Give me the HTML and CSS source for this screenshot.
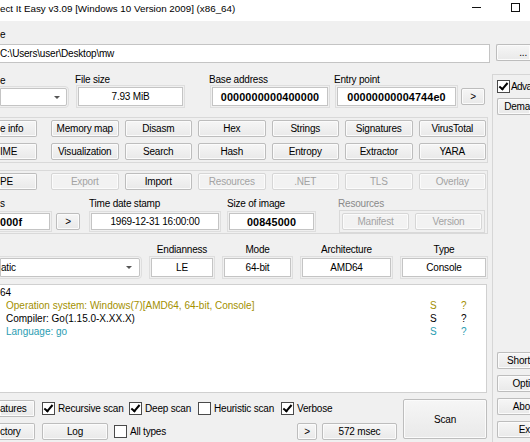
FILE: index.html
```html
<!DOCTYPE html>
<html lang="en">
<head>
    <meta charset="UTF-8">
    <title>Detect It Easy v3.09</title>
    <link rel="stylesheet" href="styles.css">
</head>
<body>
    <div class="titlebar">
        <span class="title">ect It Easy v3.09 [Windows 10 Version 2009] (x86_64)</span>
        <span class="ctl ctl-min"><i></i></span>
        <span class="ctl ctl-max"><i></i></span>
    </div>

    <div class="file-label">e</div>
    <div class="file-row">
        <div class="edit path">C:\Users\user\Desktop\mw</div>
        <div class="btn rcut dots">...</div>
    </div>

    <div class="panes">
        <div class="main">
            <div class="info-row">
                <div class="grp g-type">
                    <div class="lbl">e</div>
                    <div class="combo cut framed"><span></span><i class="arrow"></i></div>
                </div>
                <div class="grp g-size">
                    <div class="lbl">File size</div>
                    <div class="edit val framed">7.93 MiB</div>
                </div>
                <div class="grp g-base">
                    <div class="lbl">Base address</div>
                    <div class="edit val framed hex">0000000000400000</div>
                </div>
                <div class="grp g-entry">
                    <div class="lbl">Entry point</div>
                    <div class="edit val framed hex">00000000004744e0</div>
                </div>
                <div class="btn go">&gt;</div>
            </div>

            <div class="box tools">
                <div class="btn cut">e info</div>
                <div class="btn">Memory map</div>
                <div class="btn">Disasm</div>
                <div class="btn">Hex</div>
                <div class="btn">Strings</div>
                <div class="btn">Signatures</div>
                <div class="btn">VirusTotal</div>
                <div class="btn cut">IME</div>
                <div class="btn">Visualization</div>
                <div class="btn">Search</div>
                <div class="btn">Hash</div>
                <div class="btn">Entropy</div>
                <div class="btn">Extractor</div>
                <div class="btn">YARA</div>
            </div>

            <div class="box pe">
                <div class="tools-row">
                    <div class="btn cut">PE</div>
                    <div class="btn off">Export</div>
                    <div class="btn">Import</div>
                    <div class="btn off">Resources</div>
                    <div class="btn off">.NET</div>
                    <div class="btn off">TLS</div>
                    <div class="btn off">Overlay</div>
                </div>
                <div class="pe-row">
                    <div class="grp g-sec">
                        <div class="lbl">s</div>
                        <div class="edit val framed hex left-cut">000f</div>
                    </div>
                    <div class="btn go2">&gt;</div>
                    <div class="grp g-time">
                        <div class="lbl">Time date stamp</div>
                        <div class="edit val framed">1969-12-31 16:00:00</div>
                    </div>
                    <div class="grp g-img">
                        <div class="lbl">Size of image</div>
                        <div class="edit val framed hex">00845000</div>
                    </div>
                    <div class="grp g-res">
                        <div class="lbl dim">Resources</div>
                        <div class="res-frame">
                            <div class="btn off">Manifest</div>
                            <div class="btn off">Version</div>
                        </div>
                    </div>
                </div>
            </div>

            <div class="arch-row">
                <div class="lbl"></div>
                <div class="lbl">Endianness</div>
                <div class="lbl">Mode</div>
                <div class="lbl">Architecture</div>
                <div class="lbl">Type</div>
                <div class="combo cut framed wide"><span>atic</span><i class="arrow"></i></div>
                <div class="edit val framed">LE</div>
                <div class="edit val framed">64-bit</div>
                <div class="edit val framed">AMD64</div>
                <div class="edit val framed">Console</div>
            </div>

            <div class="result">
                <div class="node">64</div>
                <div class="leaf os"><span>Operation system: Windows(7)[AMD64, 64-bit, Console]</span><span>S</span><span>?</span></div>
                <div class="leaf"><span>Compiler: Go(1.15.0-X.XX.X)</span><span>S</span><span>?</span></div>
                <div class="leaf lang"><span>Language: go</span><span>S</span><span>?</span></div>
            </div>

            <div class="bottom">
                <div class="bottom-left">
                    <div class="brow brow1">
                        <div class="btn cut">atures</div>
                        <label class="check"><i class="box-c on"></i>Recursive scan</label>
                        <label class="check"><i class="box-c on"></i>Deep scan</label>
                        <label class="check"><i class="box-c"></i>Heuristic scan</label>
                        <label class="check"><i class="box-c on"></i>Verbose</label>
                    </div>
                    <div class="brow brow2">
                        <div class="btn cut">ctory</div>
                        <div class="btn log">Log</div>
                        <label class="check"><i class="box-c"></i>All types</label>
                        <div class="btn">&gt;</div>
                        <div class="btn">572 msec</div>
                    </div>
                </div>
                <div class="btn scan">Scan</div>
            </div>
        </div>

        <div class="side">
            <label class="check adv"><i class="box-c on"></i>Adva</label>
            <div class="btn rcut side-btn dema">Dema</div>
            <div class="side-fill"></div>
            <div class="btn rcut side-btn">Short</div>
            <div class="btn rcut side-btn">Opti</div>
            <div class="btn rcut side-btn">Abo</div>
            <div class="btn rcut side-btn">Ex</div>
        </div>
    </div>
</body>
</html>
```

FILE: styles.css
```css
body {
    margin: 0;
    width: 530px;
    height: 442px;
    overflow: hidden;
    background: #f0f0f0;
    color: #000;
    font-family: "Liberation Sans", Arial, sans-serif;
    font-size: 10px;
    letter-spacing: -0.2px;
}
.titlebar {
    height: 21px;
    background: #fff;
    display: flex;
    align-items: flex-start;
}
.title {
    flex: 1;
    min-width: 0;
    font-size: 9.8px;
    letter-spacing: 0;
    line-height: 17px;
    white-space: nowrap;
    overflow: hidden;
}
.ctl {
    flex: none;
    width: 39px;
    height: 16px;
    display: flex;
    justify-content: center;
}
.ctl-min i {
    width: 9px;
    height: 1px;
    margin-top: 7px;
    background: #111;
}
.ctl-max {
    width: 34px;
    justify-content: flex-start;
    padding-left: 15px;
    box-sizing: border-box;
}
.ctl-max i {
    width: 7px;
    height: 7px;
    margin-top: 3px;
    border: 1px solid #111;
}
.file-label {
    padding-top: 7px;
    line-height: 13px;
    margin-bottom: 3px;
}
.file-row {
    display: flex;
    height: 19px;
}
.edit {
    box-sizing: border-box;
    height: 19px;
    background: #fff;
    border: 1px solid #c4c4c4;
    display: flex;
    align-items: center;
    white-space: nowrap;
    overflow: hidden;
}
.path {
    flex: none;
    width: 490px;
    border-left: none;
}
.dots {
    margin-left: 6px;
    flex: 1;
    min-width: 0;
    height: 19px;
    padding-right: 3px;
}
.btn {
    box-sizing: border-box;
    height: 17px;
    border: 1px solid #bdbdbd;
    border-radius: 2px;
    background: linear-gradient(#f6f6f6, #e9e9e9);
    box-shadow: inset 0 0 0 1px #fbfbfb;
    display: flex;
    align-items: center;
    justify-content: center;
    white-space: nowrap;
    overflow: hidden;
}
.btn.off {
    color: #a3a3a3;
    border-color: #d6d6d6;
    background: #f2f2f2;
}
.cut {
    border-left: none;
    border-radius: 0 2px 2px 0;
    justify-content: flex-start;
}
.rcut {
    border-right: none;
    border-radius: 2px 0 0 2px;
    justify-content: flex-end;
}
.panes {
    display: flex;
    height: 379px;
}
.main {
    flex: none;
    width: 488px;
    padding-top: 10px;
}
.lbl {
    line-height: 13px;
    height: 13px;
    white-space: nowrap;
}
.lbl.dim {
    color: #8a8a8a;
}
.info-row {
    display: flex;
    align-items: flex-end;
}
.grp .edit {
    margin-top: 1px;
}
.val {
    justify-content: center;
}
.edit.left-cut {
    border-left: none;
    justify-content: flex-start;
}
.hex {
    font-weight: bold;
    font-size: 10.8px;
    letter-spacing: 0.15px;
}
.framed {
    outline: 1px solid #dedede;
    outline-offset: 1px;
}
.combo {
    box-sizing: border-box;
    height: 18px;
    margin-top: 1px;
    background: #fff;
    border: 1px solid #c4c4c4;
    display: flex;
    align-items: center;
    padding-right: 6px;
}
.combo span {
    flex: 1;
}
.arrow {
    width: 0;
    height: 0;
    border-left: 3px solid transparent;
    border-right: 3px solid transparent;
    border-top: 3px solid #555;
}
.g-type {
    width: 67px;
}
.g-size {
    width: 108px;
    margin-left: 8px;
}
.g-base {
    width: 119px;
    margin-left: 26px;
}
.g-entry {
    width: 122px;
    margin-left: 6px;
}
.g-size .edit,
.g-base .edit,
.g-entry .edit {
    margin-left: 3px;
}
.go {
    width: 24px;
    margin-left: 5px;
    margin-bottom: 1px;
}
.box {
    box-sizing: border-box;
    width: 488px;
    border: 1px solid #d9d9d9;
    border-left: none;
    padding: 2px 1px 2px 0;
}
.tools,
.tools-row {
    display: grid;
    grid-template-columns: 45px repeat(6, 1fr);
    column-gap: 6px;
    row-gap: 6px;
}
.tools {
    margin-top: 11px;
}
.tools .cut,
.tools-row .cut {
    width: 37px;
}
.pe {
    margin-top: 7px;
    padding-bottom: 0;
}
.pe-row {
    display: flex;
    align-items: flex-start;
    margin-top: 7px;
}
.pe-row .edit {
    height: 17px;
    margin-top: 3px;
}
.g-sec {
    width: 50px;
}
.go2 {
    width: 24px;
    margin-left: 6px;
    margin-top: 16px;
}
.g-time {
    width: 130px;
    margin-left: 9px;
}
.g-time .edit,
.g-img .edit {
    margin-left: 2px;
}
.g-img {
    width: 87px;
    margin-left: 8px;
}
.g-res {
    width: 147px;
    margin-left: 24px;
}
.res-frame {
    margin-left: 1px;
    border: 1px solid #d9d9d9;
    padding: 2px;
    display: flex;
    gap: 6px;
}
.res-frame .btn {
    width: 67px;
}
.arch-row {
    display: grid;
    grid-template-columns: 140px 62px 67px 89px 1fr;
    column-gap: 11px;
    margin-top: 9px;
    width: 486px;
}
.arch-row .lbl {
    text-align: center;
    margin-bottom: 2px;
}
.combo.wide {
    height: 19px;
    margin-top: 0;
    padding-right: 7px;
}
.result {
    box-sizing: border-box;
    width: 487px;
    height: 109px;
    margin-top: 7px;
    background: #fff;
    border: 1px solid #d0d0d0;
    border-left: none;
    padding-top: 1px;
    letter-spacing: 0;
    line-height: 13px;
}
.leaf {
    display: grid;
    grid-template-columns: 424px 31px 1fr;
    padding-left: 6px;
    white-space: nowrap;
}
.os {
    color: #a38f00;
}
.lang {
    color: #2a9db2;
}
.bottom {
    display: flex;
    margin-top: 6px;
}
.bottom-left {
    width: 397px;
}
.brow {
    display: grid;
    align-items: center;
}
.brow1 {
    grid-template-columns: 42px 87px 69px 83px 1fr;
    height: 17px;
    margin-top: 1px;
}
.brow2 {
    grid-template-columns: 42px 72px 1fr 25px 75px;
    height: 16px;
    margin-top: 6px;
}
.brow .btn {
    height: 17px;
}
.brow1 .cut,
.brow2 .cut {
    width: 35px;
}
.log {
    width: 66px;
}
.brow2 .btn:nth-child(4) {
    width: 20px;
}
.scan {
    width: 84px;
    height: 40px;
    margin-left: 6px;
}
.check {
    display: flex;
    align-items: center;
    gap: 3px;
    white-space: nowrap;
}
.box-c {
    flex: none;
    box-sizing: border-box;
    width: 13px;
    height: 13px;
    border: 1px solid #4a4a4a;
    background: #fff;
    position: relative;
}
.box-c.on::after {
    content: "";
    position: absolute;
    left: 3px;
    top: 0;
    width: 3px;
    height: 7px;
    border: solid #000;
    border-width: 0 2px 2px 0;
    transform: rotate(40deg);
}
.side {
    flex: 1;
    min-width: 0;
    overflow: hidden;
    margin: 11px 0 0 4px;
    border-left: 1px solid #d6d6d6;
    border-top: 1px solid #d6d6d6;
    padding: 5px 0 4px 4px;
    display: flex;
    flex-direction: column;
}
.side .check {
    height: 13px;
}
.adv {
    gap: 1px;
    letter-spacing: -0.6px;
}
.side-btn {
    flex: none;
    height: 17px;
    margin-top: 6px;
}
.dema {
    margin-top: 5px;
}
.side-fill {
    flex: 1;
}
.side-fill + .side-btn {
    margin-top: 0;
}
```
